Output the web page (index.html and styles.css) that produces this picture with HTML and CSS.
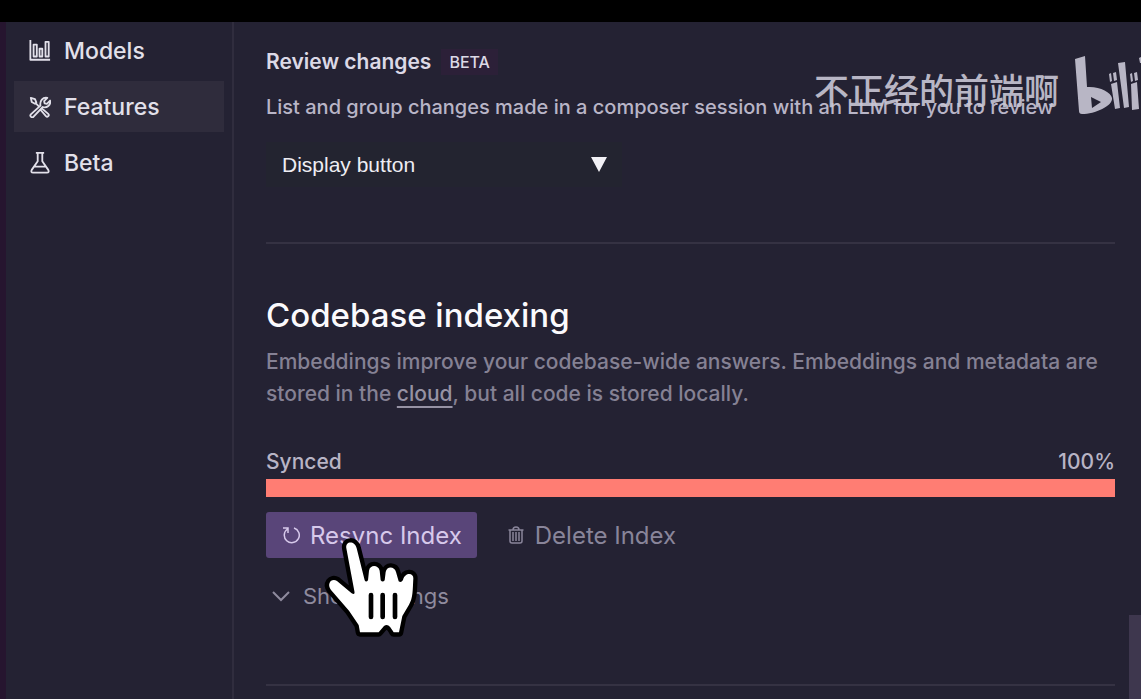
FILE: index.html
```html
<!DOCTYPE html>
<html lang="en">
<head>
<meta charset="utf-8">
<title>Settings</title>
<link rel="stylesheet" href="styles.css">
</head>
<body>
<div class="letterbox"></div>
<div class="app">
  <nav class="sidebar">
    <a class="nav-item" href="#models">
      <svg class="nav-icon" viewBox="0 0 24 24"><path d="M1.500 0v21.500H23M5 5h3.500v13H5zM11.500 9.500h3V18h-3zM18 2h3.500v16H18z"/></svg>
      Models
    </a>
    <a class="nav-item active" href="#features">
      <svg class="nav-icon" viewBox="0 0 24 24"><path d="M2 2l4.500 1.500L8 7 6.500 8.500 3 6.500zM7.500 8l3.500 3.500M14 13.500l7 6a1.600 1.600 0 0 1-2.500 2.500L12.500 15zM2 20l10.500-9.500c-1-5 2.500-9.500 7.500-8.500l-3.500 3.500.5 2.500 2.500.5L23 5c1 5-3.500 8.500-8 7L5 22.500A1.800 1.800 0 0 1 2 20z"/></svg>
      Features
    </a>
    <a class="nav-item" href="#beta">
      <svg class="nav-icon" viewBox="0 0 24 24"><path d="M7.500 1h9M9.500 1v9L3 19.500Q1.500 22.500 4.500 22.500h15q3 0 1.500-3L14.500 10V1M6 16h12"/></svg>
      Beta
    </a>
  </nav>
  <main class="content">
    <section>
      <h3 class="setting-title">Review changes <span class="badge">BETA</span></h3>
      <div class="description-row">
        <p class="setting-description" id="review-description">List and group changes made in a composer session with an LLM for you to review</p>
        <div class="watermark">
          <span lang="zh">不正经的前端啊</span>
          <svg class="watermark-logo" viewBox="0 0 68 64" role="img" aria-label="bilibili">
            <path fill-rule="evenodd" d="M2 5l10-3 2 31c12-1 24 5 25 11 1 8-17 16-30 16q-3 0-3-3zM18 43l1 11 9-6z"/>
            <path d="M36 20l2-1 1 8-2 1zM40 19l3-1 1 8-3 1zM38 30l6-2 3 26-5 1zM45 9l7-1 4 45-5 1zM57 20l2-1 1 8-2 1zM61 19l3-1 1 8-3 1zM58 30l6-2 2 27-7 1zM66 4l2-1v6h-1z"/>
          </svg>
        </div>
      </div>
      <div class="select-wrap">
        <select class="select" aria-label="Review changes" aria-describedby="review-description"><option>Display button</option></select>
        <svg class="select-arrow" viewBox="0 0 16 16"><path d="M0 0h16L8 15z"/></svg>
      </div>
    </section>
    <hr class="divider">
    <section>
      <h2 class="section-title">Codebase indexing</h2>
      <p class="section-description">Embeddings improve your codebase-wide answers. Embeddings and metadata are stored in the <a class="link" href="#cloud">cloud</a>, but all code is stored locally.</p>
      <div class="status"><span>Synced</span><span>100%</span></div>
      <div class="progress" role="progressbar" aria-label="Synced" aria-valuenow="100"><div class="progress-fill" style="width:100%"></div></div>
      <div class="actions">
        <button class="button primary" type="button">
          <svg class="button-icon" viewBox="0 0 18 18"><path d="M1 2h5v5M5.500 3A7.500 7.500 0 1 0 12 2"/></svg>
          Resync Index
          <svg class="cursor" viewBox="0 0 300 330" aria-hidden="true">
            <path class="cursor-outline" d="M64 55C60 32 90 31 95 55L119 151Q123 158 129 151L132 122C135 103 160 104 164 122L167 151Q173 158 179 151L182 126C186 107 209 110 213 126L221 154Q228 160 234 150C240 126 266 128 265 145C263 180 264 205 252 224L232 258L222 307H206C196 289 188 279 177 288L161 307H105L101 285L72 242L18 180C4 162 19 143 36 153L80 190Q91 196 88 183z"/>
            <path class="cursor-lines" d="M138 195v66M173 195v66M210 195v66"/>
          </svg>
        </button>
        <button class="button quiet" type="button">
          <svg class="button-icon" viewBox="0 0 18 18"><path d="M1.500 4h15M6 4q0-3 3-3t3 3M3 4v11q0 2 2 2h8q2 0 2-2V4M6 6v9M9 6v9M12 6v9"/></svg>
          Delete Index
        </button>
      </div>
      <button class="disclosure" type="button">
        <svg class="chevron" viewBox="0 0 20 12"><path d="M2 2l8 8 8-8"/></svg>
        Show settings
      </button>
    </section>
    <hr class="divider last">
  </main>
  <div class="scroll-thumb"></div>
</div>
</body>
</html>
```
FILE: styles.css
```css
* { box-sizing: border-box; }
body {
  margin: 0;
  height: 100vh;
  display: flex;
  flex-direction: column;
  overflow: hidden;
  background: #242233;
  color: #dcd9e6;
  font-family: Inter, "Noto Sans CJK SC", sans-serif;
}
h2, h3, p { margin: 0; }
svg { fill: none; stroke: currentColor; flex: none; }
button { font: inherit; border: 0; background: none; }
.letterbox { height: 22px; flex: none; background: #000; }
.app { flex: 1; min-height: 0; display: flex; position: relative; border-left: 6px solid #26152f; }
.sidebar {
  flex: none;
  width: 228px;
  padding: 3px 8px;
  display: flex;
  flex-direction: column;
  gap: 5px;
  border-right: 2px solid #302d3e;
}
.nav-item {
  display: flex;
  align-items: center;
  gap: 13px;
  height: 51px;
  padding: 0 15px;
  color: #e2e0ea;
  font-size: 23px;
  font-weight: 500;
  text-decoration: none;
}
.nav-item.active { background: #2f2c3c; }
.nav-icon { width: 22px; height: 22px; stroke-width: 2; stroke-linejoin: round; }
.content { flex: 1; min-width: 0; padding: 25px 26px 0 32px; }
.setting-title { display: flex; align-items: center; gap: 10px; font-size: 21px; line-height: 30px; font-weight: 600; }
.badge { padding: 0 8px; background: #2c2038; font-size: 16px; line-height: 26px; font-weight: 500; }
.description-row { position: relative; margin-top: 14px; }
.setting-description { color: #b9b5c7; font-size: 20px; line-height: 32px; font-weight: 500; }
.watermark {
  position: absolute;
  right: -26px;
  bottom: 5px;
  display: flex;
  align-items: flex-end;
  gap: 14px;
  color: #c9c7d5;
  font: 500 35px/58px "Noto Sans CJK SC", sans-serif;
  white-space: nowrap;
  opacity: .9;
}
.watermark-logo { width: 68px; height: 64px; fill: currentColor; stroke: none; }
.select-wrap { position: relative; width: 356px; max-width: 100%; margin-top: 19px; }
.select {
  width: 100%;
  height: 45px;
  padding: 0 16px;
  border: 0;
  appearance: none;
  background: #232430;
  color: #eeedf3;
  font: 21px "Liberation Sans", sans-serif;
}
.select-arrow { position: absolute; right: 15px; top: 15px; width: 16px; height: 16px; fill: #f1f0f5; stroke: none; pointer-events: none; }
.divider { height: 2px; margin: 55px 0 0; border: 0; background: #353243; }
.divider.last { margin-top: 73px; }
.section-title { margin-top: 51px; color: #fbfafd; font-size: 33px; line-height: 40px; font-weight: 500; }
.section-description { margin-top: 11px; color: #858194; font-size: 21px; line-height: 32px; font-weight: 500; }
.link { color: #9692a4; text-decoration: underline; text-underline-offset: 5px; }
.status { display: flex; justify-content: space-between; margin-top: 39px; color: #b8b4c5; font-size: 21px; line-height: 26px; font-weight: 500; }
.progress { height: 18px; margin-top: 4px; background: #393547; }
.progress-fill { height: 100%; background: #ff7d73; }
.actions { display: flex; gap: 14px; margin-top: 15px; }
.button { position: relative; display: flex; align-items: center; gap: 10px; height: 46px; padding: 0 15px 0 16px; font-size: 24px; white-space: nowrap; }
.button-icon { width: 18px; height: 18px; stroke-width: 1.5; }
.primary { background: #594579; color: #d7c9eb; border-radius: 3px; }
.quiet { color: #89859a; }
.cursor { position: absolute; left: 59px; top: 18px; width: 100px; height: 110px; overflow: visible; z-index: 1; }
.cursor-outline { fill: #fff; stroke: #000; stroke-width: 26; stroke-linejoin: round; paint-order: stroke; }
.cursor-lines { stroke: #000; stroke-width: 14; stroke-linecap: round; }
.disclosure { display: flex; align-items: center; gap: 12px; margin-top: 23px; padding: 0 5px; color: #8f8b9e; font-size: 22px; line-height: 30px; }
.chevron { width: 20px; height: 12px; stroke-width: 2; }
.scroll-thumb { position: absolute; right: 0; bottom: 0; width: 12px; height: 84px; background: #3e374e; }
```
